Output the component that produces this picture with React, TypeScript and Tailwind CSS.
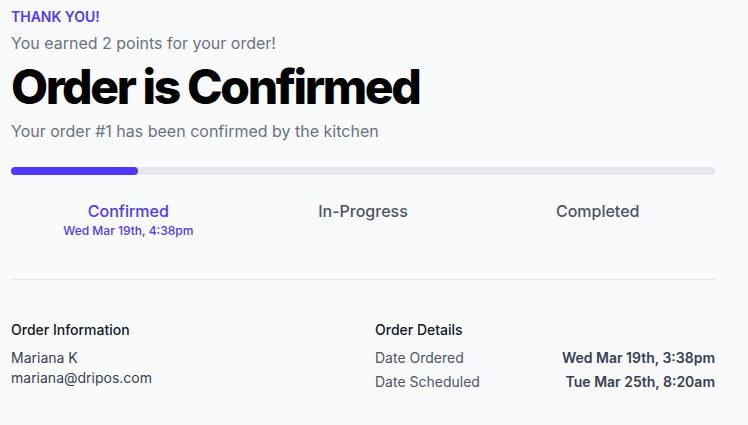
export default function App() {
  const steps = [
    { label: 'Confirmed', date: 'Wed Mar 19th, 4:38pm', active: true },
    { label: 'In-Progress', date: '', active: false },
    { label: 'Completed', date: '', active: false },
  ]

  return (
    <div className="min-h-screen bg-gray-50" style={{ fontFamily: 'Inter, "Noto Sans", sans-serif' }}>
      <main className="w-[704px] ml-[11px] pt-[7px]">
        <p className="text-sm font-semibold uppercase text-indigo-600">Thank you!</p>
        <p className="mt-1 text-base text-gray-500">You earned 2 points for your order!</p>
        <h1 className="mt-2 text-5xl font-extrabold tracking-tighter text-black">Order is Confirmed</h1>
        <p className="mt-2 text-base text-gray-500">Your order #1 has been confirmed by the kitchen</p>

        <div className="mt-6 h-2 w-full rounded-full bg-gray-200">
          <div className="h-2 rounded-full bg-indigo-600" style={{ width: '18%' }} />
        </div>

        <div className="mt-6 grid grid-cols-3 text-center">
          {steps.map(s => (
            <div key={s.label}>
              <p className={`text-base font-medium ${s.active ? 'text-indigo-600' : 'text-gray-600'}`}>{s.label}</p>
              {s.date && <p className="text-xs font-medium text-indigo-600">{s.date}</p>}
            </div>
          ))}
        </div>

        <div className="mt-10 border-t border-gray-200" />

        <div className="mt-10 grid grid-cols-2 gap-x-6">
          <div>
            <h2 className="text-sm font-medium text-gray-900">Order Information</h2>
            <div className="mt-2 text-sm text-gray-700">
              <p>Mariana K</p>
              <p>mariana@dripos.com</p>
            </div>
          </div>
          <div>
            <h2 className="text-sm font-medium text-gray-900">Order Details</h2>
            <dl className="mt-2 space-y-1 text-sm">
              <div className="flex justify-between">
                <dt className="text-gray-600">Date Ordered</dt>
                <dd className="font-semibold text-gray-700">Wed Mar 19th, 3:38pm</dd>
              </div>
              <div className="flex justify-between">
                <dt className="text-gray-600">Date Scheduled</dt>
                <dd className="font-semibold text-gray-700">Tue Mar 25th, 8:20am</dd>
              </div>
            </dl>
          </div>
        </div>
      </main>
    </div>
  )
}
